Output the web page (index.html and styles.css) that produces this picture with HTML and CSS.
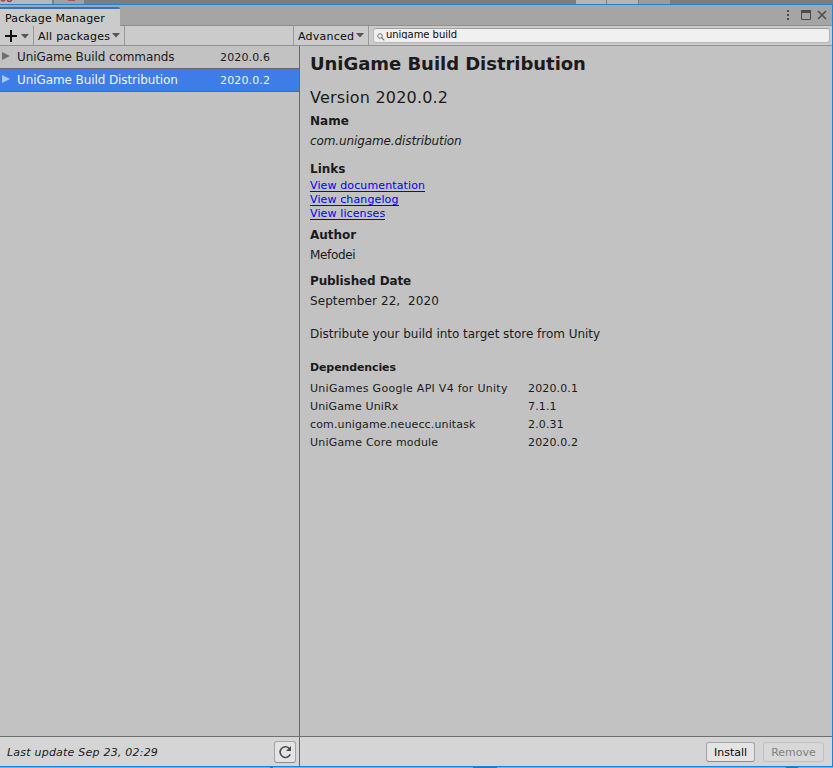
FILE: index.html
```html
<!DOCTYPE html>
<html lang="en">
<head>
<meta charset="utf-8">
<title>Package Manager</title>
<link rel="stylesheet" href="styles.css">
</head>
<body>
<div class="backdrop"><i class="b1"></i><i class="b2"></i><i class="b3"></i><i class="b4"></i><i class="b5"></i><i class="b6"></i>
<svg class="marks" width="84" height="4"><path d="M1 0q2 2 4 0M7 0q2 3 5 0M68 0h6v1" fill="none" stroke="#a83b42" stroke-width="1.4"/></svg></div>
<main class="window">
  <header class="titlebar">
    <div class="tab"><span class="t-tab">Package Manager</span></div>
    <svg class="controls" width="52" height="20" viewBox="780 5 52 20">
      <path d="M787 10h2v2h-2zM787 14h2v2h-2zM787 18h2v2h-2z" fill="#4c4c4c"/>
      <path d="M801.5 10.5h9v9h-9z" fill="none" stroke="#4c4c4c"/><path d="M801 10h10v3h-10z" fill="#4c4c4c"/>
      <path d="M818 11l8 8M826 11l-8 8" stroke="#4c4c4c" stroke-width="1.5"/>
    </svg>
  </header>
  <div class="toolbar">
    <button class="tool add"><svg width="33" height="19" viewBox="0 26 33 19"><path d="M5 36h12M11 30v12" stroke="#111" stroke-width="2"/><path d="M21 34h8l-4 4.5z" fill="#555"/></svg></button>
    <button class="tool filter"><span class="t-all">All packages</span><svg width="8" height="5"><path d="M0 0h8L4 4.5z" fill="#555"/></svg></button>
    <div class="spacer"></div>
    <button class="tool advanced"><span class="t-adv">Advanced</span><svg width="8" height="5"><path d="M0 0h8L4 4.5z" fill="#555"/></svg></button>
    <div class="search"><svg width="8" height="8" viewBox="0 0 8 8"><circle cx="3" cy="3" r="2.3" fill="none" stroke="#777"/><path d="M4.7 4.7L7.3 7.3" stroke="#777" stroke-width="1.2"/></svg><div class="query"><span class="t-query">unigame build</span></div></div>
  </div>
  <section class="content">
    <nav class="list">
      <div class="row"><svg class="arrow" width="8" height="8"><path d="M0 0v8l8-4z"/></svg><span class="pkg t-r1">UniGame Build commands</span><span class="t-ver">2020.0.6</span></div>
      <div class="row selected"><svg class="arrow" width="8" height="8"><path d="M0 0v8l8-4z"/></svg><span class="pkg t-r2">UniGame Build Distribution</span><span class="t-ver">2020.0.2</span></div>
    </nav>
    <article class="details">
      <h1><span class="t-title">UniGame Build Distribution</span></h1>
      <p class="version"><span class="t-version">Version 2020.0.2</span></p>
      <h2><span>Name</span></h2>
      <p class="id"><span class="t-id">com.unigame.distribution</span></p>
      <h2 class="links-head"><span>Links</span></h2>
      <div class="links"><a>View documentation</a><a>View changelog</a><a>View licenses</a></div>
      <h2 class="author-head"><span>Author</span></h2>
      <p><span class="t-author">Mefodei</span></p>
      <h2 class="date-head"><span class="t-pub">Published Date</span></h2>
      <p><span class="t-date">September 22,&nbsp; 2020</span></p>
      <p class="description"><span class="t-desc">Distribute your build into target store from Unity</span></p>
      <h3><span class="t-dep">Dependencies</span></h3>
      <div class="deps">
        <span class="t-d1">UniGames Google API V4 for Unity</span><span>2020.0.1</span>
        <span>UniGame UniRx</span><span>7.1.1</span>
        <span>com.unigame.neuecc.unitask</span><span>2.0.31</span>
        <span class="t-d4">UniGame Core module</span><span>2020.0.2</span>
      </div>
    </article>
  </section>
  <footer class="footer">
    <div class="status"><em class="t-last">Last update Sep 23, 02:29</em><button class="btn refresh"><svg width="14" height="14" viewBox="0 0 14 14"><path d="M12.2 9.4A5.3 5.3 0 1 1 11.2 3.4" fill="none" stroke="#4c4c4c" stroke-width="1.6"/><path d="M13 1v5H8z" fill="#4c4c4c"/></svg></button></div>
    <div class="actions"><button class="btn install"><span>Install</span></button><button class="btn remove" disabled><span>Remove</span></button></div>
  </footer>
</main>
<div class="below"><i class="n1"></i><i class="n2"></i><i class="n3"></i></div>
</body>
</html>
```
FILE: styles.css
```css
* { box-sizing: border-box; }
body { margin: 0; width: 833px; height: 768px; overflow: hidden; background: #858585; color: #1b1b1b; font: 11px "DejaVu Sans", Verdana, sans-serif; white-space: nowrap; }
h1, h2, h3, p { margin: 0; }
button { font: inherit; color: inherit; padding: 0; border: 0; background: none; }
svg { display: block; flex: none; }
.backdrop { height: 4px; display: flex; position: relative; background: #7d7d7d; }
.backdrop i { height: 4px; }
.marks { position: absolute; left: 0; top: 0; }
.b1 { width: 52px; background: #b8b8b8; }
.b2 { width: 30px; margin-left: 2px; background: #a0a0a0; }
.b3 { width: 492px; background: #7d7d7d; }
.b4 { width: 30px; background: #b5b5b5; }
.b5 { width: 31px; margin-left: 1px; background: #b5b5b5; }
.b6 { width: 31px; margin-left: 1px; background: #9c9c9c; }
.window { height: 763px; display: flex; flex-direction: column; border: solid #1c83d8; border-width: 1px 1px 1px 0; background: #c2c2c2; }
.titlebar { height: 21px; display: flex; justify-content: space-between; background: #a5a5a5; border-bottom: 1px solid #8f8f8f; }
.tab { width: 120px; height: 19px; margin-top: 2px; padding: 2px 0 0 5px; background: #cbcbcb; border-top: 2px solid #3a72b0; border-radius: 0 2px 0 0; line-height: 15px; color: #080808; }
.toolbar { height: 20px; display: flex; background: #cbcbcb; border-bottom: 1px solid #929292; color: #090909; }
.tool { height: 19px; display: flex; align-items: center; border-right: 1px solid #999; }
.tool span { padding-top: 2px; }
.add { width: 34px; }
.filter { width: 91px; padding-left: 4px; gap: 2px; }
.spacer { flex: 1; }
.advanced { width: 76px; border-left: 1px solid #999; padding-left: 4px; gap: 2px; }
.search { width: 457px; height: 15px; margin: 2px 2px 0 4px; padding-left: 3px; display: flex; align-items: center; gap: 1px; background: #f0f0f0; border: 1px solid #b7b7b7; border-top-color: #a0a0a0; border-radius: 3px; }
.search svg { margin-top: 2px; }
.query { height: 10px; line-height: 12px; overflow: hidden; margin-top: -3px; font-size: 10px; }
.content { flex: 1; display: flex; }
.list { width: 300px; border-right: 1px solid #686868; }
.row { height: 23px; display: flex; align-items: center; border-bottom: 1px solid #686868; padding-left: 2px; font-size: 12px; }
.arrow { margin: -2px 7px 0 0; fill: #707070; }
.pkg { width: 203px; }
.selected { background: #3e7de7; color: #f0f4fc; }
.selected .arrow { fill: #a9c7fc; }
.details { flex: 1; padding: 7px 0 0 10px; font-size: 12px; }
h1 { font-size: 18px; line-height: 22px; }
.version { font-size: 16px; line-height: 20px; margin-top: 13px; }
h2 { font-size: 12px; line-height: 16px; margin-top: 6px; }
.version + h2 { margin-top: 5px; }
.details p:not(.version) { line-height: 16px; margin-top: 4px; }
.id { font-style: italic; }
.details .links-head { margin-top: 12px; }
.links { display: flex; flex-direction: column; align-items: flex-start; margin-top: 2px; font-size: 11px; letter-spacing: .12px; color: #0000f5; }
.links a { height: 13px; margin-bottom: 1px; line-height: 13px; border-bottom: 1px solid #0000f5; }
.date-head { margin-top: 10px; }
.details .description:not(.version) { margin-top: 17px; }
h3 { font-size: 11px; line-height: 14px; margin-top: 19px; }
.deps { display: grid; grid-template-columns: 218px 100px; grid-auto-rows: 18px; line-height: 18px; margin-top: 5px; font-size: 11px; letter-spacing: .14px; }
.footer { height: 30px; display: flex; border-top: 1px solid #707070; background: #d5d5d5; }
.status { width: 300px; border-right: 1px solid #686868; display: flex; align-items: center; justify-content: space-between; padding: 0 3px 0 7px; }
.btn { display: flex; align-items: center; justify-content: center; background: #e4e4e4; border: 1px solid #a4a4a4; border-bottom-color: #8c8c8c; border-radius: 3px; color: #090909; }
.refresh { width: 22px; height: 22px; margin-top: 1px; }
.actions { flex: 1; display: flex; justify-content: flex-end; padding: 5px 8px 0 0; gap: 8px; }
.install { width: 49px; height: 20px; }
.remove { width: 61px; height: 20px; background: #d8d8d8; border-color: #c0c0c0; color: #828282; }
.below { height: 1px; display: flex; background: #a5a5a5; }
.below i { height: 1px; background: #666; }
.n1 { width: 3px; margin-left: 270px; }
.n2 { width: 24px; margin-left: 200px; }
.n3 { width: 12px; margin-left: 289px; }

/* Tracking per label */
.t-tab { letter-spacing: .18px; }
.t-all, .t-adv { letter-spacing: .25px; }
.t-query { letter-spacing: -.05px; }
.t-r1, .t-r2 { letter-spacing: -.09px; }
.t-ver { font-size: 11px; letter-spacing: .14px; }
.t-title { letter-spacing: -.04px; }
.t-version { letter-spacing: .19px; }
.t-id { letter-spacing: -.11px; }
.t-author { letter-spacing: -.35px; }
.t-pub, .t-dep { letter-spacing: -.11px; }
.t-date { letter-spacing: .08px; }
.t-desc { letter-spacing: -.03px; }
.t-d1 { letter-spacing: .28px; }
.t-d4 { letter-spacing: .2px; }
.t-last { letter-spacing: .22px; padding-top: 2px; }
```
